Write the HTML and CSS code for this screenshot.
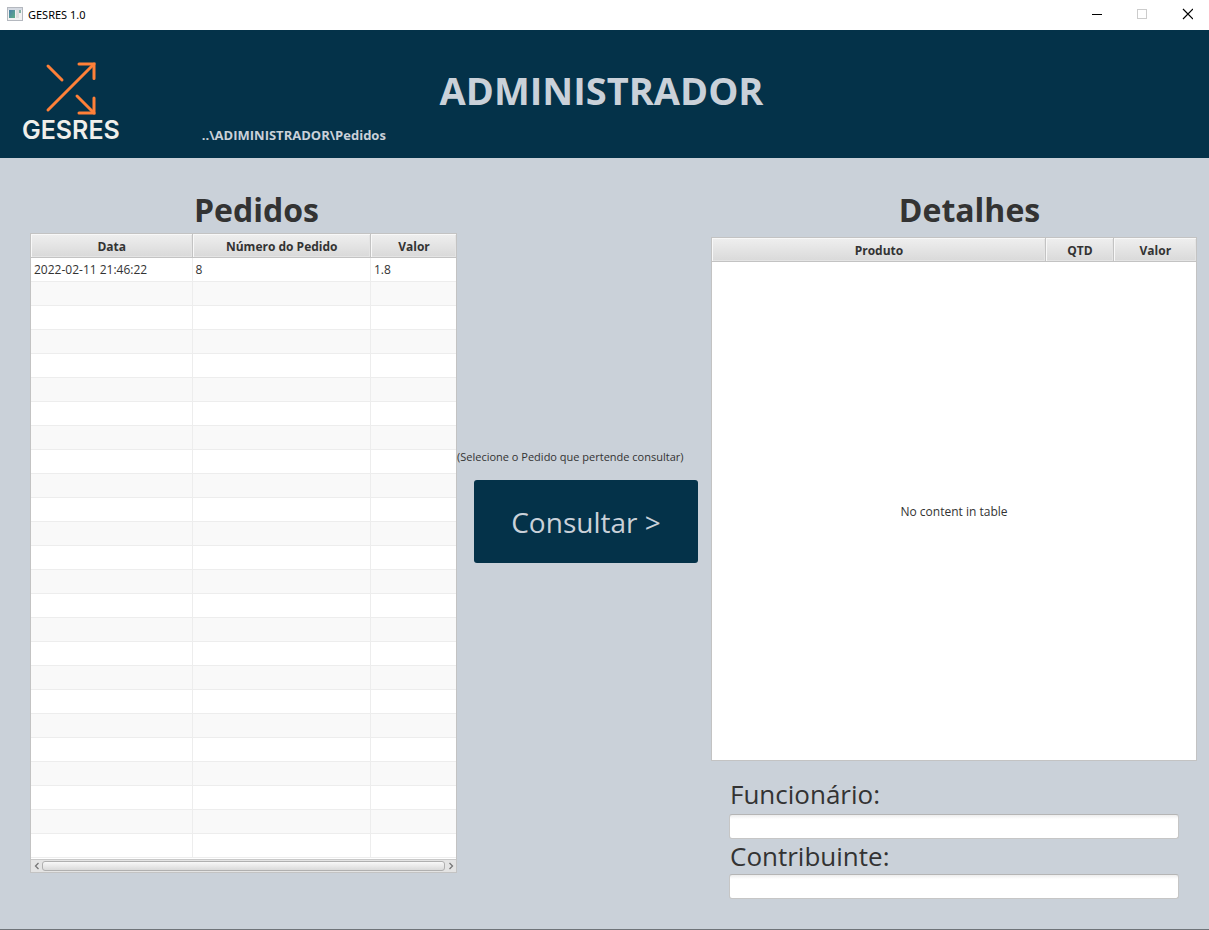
FILE: index.html
```html
<!DOCTYPE html>
<html lang="pt">
<head>
<meta charset="utf-8">
<title>GESRES 1.0</title>
<link rel="stylesheet" href="styles.css">
</head>
<body>
<div class="window">
  <div class="titlebar">
    <svg class="app-icon" width="16" height="14" viewBox="0 0 16 14" aria-hidden="true">
      <defs><linearGradient id="pane" x1="0" y1="0" x2="1" y2="1"><stop offset="0" stop-color="#4a7fa8"/><stop offset="1" stop-color="#5fae86"/></linearGradient></defs>
      <rect x="0.5" y="0.5" width="15" height="13" fill="#f2f2f2" stroke="#b4b8bf"/>
      <rect x="1" y="1" width="14" height="2" fill="#d5dae2"/>
      <rect x="2" y="3" width="6" height="8" fill="url(#pane)"/>
      <rect x="9" y="3" width="3" height="8" fill="#dedede"/>
      <rect x="12" y="3" width="2" height="3" fill="#86b3a6"/>
    </svg>
    <span class="app-name">GESRES 1.0</span>
    <div class="window-controls">
      <button type="button" aria-label="Minimizar"><svg width="12" height="12" viewBox="0 0 12 12"><path d="M1 6.5h10" stroke="#000"/></svg></button>
      <button type="button" aria-label="Maximizar" disabled><svg width="12" height="12" viewBox="0 0 12 12"><rect x="1.5" y="1.5" width="9" height="9" fill="none" stroke="#ccc"/></svg></button>
      <button type="button" aria-label="Fechar"><svg width="12" height="12" viewBox="0 0 12 12"><path d="M2 1l10 10M12 1L2 11" stroke="#000" stroke-width="1.2"/></svg></button>
    </div>
  </div>

  <header class="banner">
    <div class="brand-side">
      <div class="logo">
        <svg width="54" height="56" viewBox="0 0 54 56" fill="none" stroke="#ff8038" stroke-width="3" stroke-linecap="round" stroke-linejoin="miter" aria-hidden="true">
          <path d="M4 6L18 20"/>
          <path d="M4 50L50 4"/>
          <path d="M35 4H50V18.500"/>
          <path d="M33 36L50 53"/>
          <path d="M35 53H50V38"/>
        </svg>
        <span class="logo-text">GESRES</span>
      </div>
      <div class="path">..\ADIMINISTRADOR\Pedidos</div>
    </div>
    <h1 class="banner-title">ADMINISTRADOR</h1>
  </header>

  <main class="content">
    <section class="orders">
      <h2 class="heading">Pedidos</h2>
      <div class="table-frame">
        <table class="grid">
          <colgroup><col class="col-date"><col class="col-number"><col class="col-value"></colgroup>
          <thead><tr><th>Data</th><th>Número do Pedido</th><th>Valor</th></tr></thead>
          <tbody id="orders-body">
            <tr><td>2022-02-11 21:46:22</td><td>8</td><td>1.8</td></tr>
          </tbody>
        </table>
        <div class="scrollbar">
          <button type="button" aria-label="Deslocar à esquerda"><svg width="6" height="8" viewBox="0 0 6 8"><path d="M4.500 1L1.500 4L4.500 7" fill="none" stroke="#777" stroke-width="1.300"/></svg></button>
          <div class="thumb"></div>
          <button type="button" aria-label="Deslocar à direita"><svg width="6" height="8" viewBox="0 0 6 8"><path d="M1.500 1L4.500 4L1.500 7" fill="none" stroke="#777" stroke-width="1.300"/></svg></button>
        </div>
      </div>
    </section>

    <section class="action">
      <p class="hint">(Selecione o Pedido que pertende consultar)</p>
      <button type="button" class="consult">Consultar &gt;</button>
    </section>

    <section class="details">
      <h2 class="heading">Detalhes</h2>
      <div class="table-frame">
        <table class="grid">
          <colgroup><col class="col-product"><col class="col-qty"><col class="col-price"></colgroup>
          <thead><tr><th>Produto</th><th>QTD</th><th>Valor</th></tr></thead>
          <tbody><tr><td class="placeholder" colspan="3">No content in table</td></tr></tbody>
        </table>
      </div>
      <form class="fields">
        <label for="employee">Funcionário:</label>
        <input id="employee" type="text">
        <label for="taxpayer">Contribuinte:</label>
        <input id="taxpayer" type="text">
      </form>
    </section>
  </main>
</div>
<script src="app.js"></script>
</body>
</html>
```

FILE: app.js
```js
// Fill the orders table with empty rows below the data.
const VISIBLE_ROWS = 25;
const body = document.getElementById("orders-body");
while (body.rows.length < VISIBLE_ROWS) {
  const row = body.insertRow();
  for (let i = 0; i < 3; i++) row.insertCell();
}
```

FILE: styles.css
```css
* { box-sizing: border-box; }

body {
  margin: 0;
  font-family: "Segoe UI", "Open Sans", "Noto Sans", sans-serif;
  font-size: 12px;
  color: #333;
}

h1, h2, p { margin: 0; }

.window {
  display: flex;
  flex-direction: column;
  min-height: 100vh;
  background: #cad1d9;
  border-bottom: 1px solid #6f7479;
}

.titlebar {
  display: flex;
  align-items: center;
  gap: 5px;
  height: 30px;
  padding: 0 0 2px 7px;
  background: #fff;
  color: #000;
}

.app-name { font-family: "Segoe UI", "Noto Sans", sans-serif; font-size: 11px; }

.window-controls { display: flex; margin-left: auto; }

.window-controls button {
  display: flex;
  align-items: center;
  justify-content: center;
  width: 45px;
  height: 28px;
  padding: 0;
  border: 0;
  background: none;
}

.banner {
  display: grid;
  grid-template-columns: 1fr auto 1fr;
  height: 128px;
  padding-right: 6px;
  background: #043249;
  color: #cad1d9;
}

.brand-side {
  display: flex;
  align-items: flex-end;
  gap: 82px;
  padding: 0 0 14px 22px;
}

.logo { display: flex; flex-direction: column; align-items: center; }
.logo svg { display: block; }

.logo-text {
  font: 600 25px/28px Inter, sans-serif;
  color: #f0efeb;
}

.path { font-size: 13px; font-weight: 700; line-height: 18px; }

.banner-title {
  padding-top: 33px;
  font-size: 38px;
  line-height: 54px;
}

.content {
  flex: 1;
  display: grid;
  grid-template-columns: 427fr 254fr 486fr;
  padding: 28px 12px 24px 30px;
}

.heading {
  font-size: 32px;
  line-height: 47px;
  text-align: center;
}

.orders .heading { padding-left: 26px; }
.details .heading { padding: 0 0 4px 31px; }

.table-frame { border: 1px solid #c3c3c3; background: #fff; }

.grid {
  width: 100%;
  table-layout: fixed;
  border-collapse: separate;
  border-spacing: 0;
}

.col-date { width: 38%; }
.col-number { width: 42%; }
.col-value { width: 20%; }
.col-product { width: 69%; }
.col-qty { width: 14%; }
.col-price { width: 17%; }

.grid th {
  height: 24px;
  padding: 2px 0 0 1px;
  border-right: 1px solid #c3c3c3;
  border-bottom: 1px solid #c3c3c3;
  background: linear-gradient(#efefef, #d9d9d9);
  box-shadow: inset 1px 1px #f8f8f8, inset -1px -1px #e4e4e4;
  line-height: 16px;
}

.grid td {
  height: 24px;
  padding: 0 3px;
  border-right: 1px solid #ededed;
  border-bottom: 1px solid #ededed;
  line-height: 16px;
}

.grid tr > :last-child { border-right: 0; }
.grid tr:nth-child(even) td { background: #f9f9f9; }

.grid .placeholder { height: 498px; padding-top: 2px; border: 0; text-align: center; }

.scrollbar {
  display: flex;
  align-items: center;
  height: 13px;
  margin-top: 1px;
  border-top: 1px solid #c8c8c8;
  background: #e4e4e4;
}

.scrollbar button {
  display: flex;
  align-items: center;
  justify-content: center;
  width: 11px;
  height: 12px;
  padding: 0;
  border: 0;
  background: none;
}

.thumb {
  flex: 1;
  height: 10px;
  border: 1px solid #b0b0b0;
  border-radius: 3px;
  background: linear-gradient(#f8f8f8, #dadada);
}

.action { padding: 262px 13px 0 0; }

.hint { font-size: 11px; line-height: 18px; white-space: nowrap; }

.consult {
  display: block;
  width: calc(100% - 17px);
  height: 83px;
  margin: 14px 0 0 17px;
  padding: 0;
  border: 0;
  border-radius: 3px;
  background: #043249;
  color: #cad1d9;
  font: 28px/40px "Segoe UI", "Open Sans", sans-serif;
}

.fields {
  display: flex;
  flex-direction: column;
  padding: 16px 18px 0 18px;
}

.fields label { padding-left: 1px; font-size: 26px; line-height: 35px; }
.fields label:first-child { padding-bottom: 2px; }

.fields input {
  width: 100%;
  height: 25px;
  padding: 0 6px;
  border: 1px solid #c6c6c6;
  border-top-color: #b5b5b5;
  border-radius: 3px;
  background: linear-gradient(#ededed, #fff 4px);
  font: inherit;
}
```
